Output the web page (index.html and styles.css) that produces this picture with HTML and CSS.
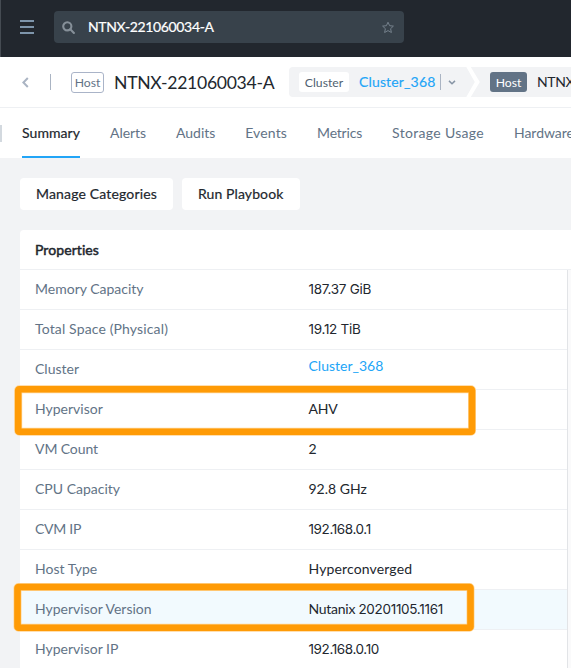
FILE: index.html
```
<!DOCTYPE html>
<html lang="en">
<head>
<meta charset="utf-8">
<title>NTNX-221060034-A</title>
<link rel="stylesheet" href="styles.css">
</head>
<body>
<div class="page">
  <header class="topbar">
    <svg class="menu" width="14" height="14" viewBox="0 0 14 14"><path d="M0 1h14M0 7h14M0 13h14"/></svg>
    <div class="search">
      <svg class="lens" width="13" height="13" viewBox="0 0 13 13"><circle cx="5.3" cy="5.3" r="4.1"/><path d="M8.3 8.3l3.6 3.6"/></svg>
      <span class="query">NTNX-221060034-A</span>
      <svg class="star" width="14" height="13" viewBox="0 0 14 13"><path d="M7 1.2l1.6 3.5 3.8.4-2.8 2.6.8 3.8L7 9.6l-3.4 1.9.8-3.8L1.6 5.1l3.8-.4z"/></svg>
    </div>
  </header>

  <div class="titlebar">
    <svg class="back" width="7" height="11" viewBox="0 0 7 11"><path d="M5.8 1L1.4 5.5 5.8 10"/></svg>
    <span class="rule"></span>
    <span class="tag outlined">Host</span>
    <h1>NTNX-221060034-A</h1>
    <nav class="crumbs">
      <span class="tag plain">Cluster</span>
      <a class="crumb-link">Cluster_368</a>
      <span class="rule crumb-rule"></span>
      <svg class="caret" width="8" height="5" viewBox="0 0 8 5"><path d="M1 .9l3 2.9 3-2.9"/></svg>
      <svg class="sep" width="14" height="30" viewBox="0 0 14 30"><path d="M.3 0h4.5l9 15-9 15H.3l8.5-15z"/></svg>
      <span class="tag filled">Host</span>
      <span class="crumb-current">NTNX-221060034-A</span>
    </nav>
  </div>

  <nav class="tabs">
    <span class="edge"></span>
    <a class="tab active">Summary</a>
    <a class="tab">Alerts</a>
    <a class="tab">Audits</a>
    <a class="tab roomy">Events</a>
    <a class="tab snug">Metrics</a>
    <a class="tab wide">Storage Usage</a>
    <a class="tab">Hardware</a>
  </nav>

  <main>
    <div class="actions">
      <button class="manage">Manage Categories</button>
      <button>Run Playbook</button>
    </div>
    <section class="card">
      <h2>Properties</h2>
      <dl>
        <div class="row"><dt>Memory Capacity</dt><dd class="num">187.37 GiB</dd></div>
        <div class="row"><dt class="w1">Total Space (Physical)</dt><dd class="num">19.12 TiB</dd></div>
        <div class="row"><dt>Cluster</dt><dd class="link">Cluster_368</dd></div>
        <div class="row"><dt>Hypervisor</dt><dd class="t3">AHV</dd></div>
        <div class="row"><dt class="t1">VM Count</dt><dd>2</dd></div>
        <div class="row"><dt>CPU Capacity</dt><dd>92.8 GHz</dd></div>
        <div class="row"><dt class="t3">CVM IP</dt><dd class="num ip">192.168.0.1</dd></div>
        <div class="row"><dt>Host Type</dt><dd class="w1">Hyperconverged</dd></div>
        <div class="row hover"><dt>Hypervisor Version</dt><dd class="t3">Nutanix <span class="num build">20201105.1161</span></dd></div>
        <div class="row"><dt>Hypervisor IP</dt><dd class="num ip">192.168.0.10</dd></div>
      </dl>
    </section>
  </main>

  <svg class="marks" width="571" height="668" viewBox="0 0 571 668">
    <g class="halo"><rect x="18.2" y="389.2" width="453.8" height="42.6" rx="1"/><rect x="17.5" y="587" width="453" height="40.8" rx="1"/></g>
    <g class="ink"><rect x="18.2" y="389.2" width="453.8" height="42.6" rx="1"/><rect x="17.5" y="587" width="453" height="40.8" rx="1"/></g>
  </svg>
</div>
</body>
</html>
```
FILE: styles.css
```
* { box-sizing: border-box; }
body { margin: 0; font: 14px/20px Lato, "Liberation Sans", sans-serif; color: #22272e; }
h1, h2, dl, dd { margin: 0; font-weight: 400; }
svg { flex: none; fill: none; }
.page { position: relative; width: 571px; height: 668px; overflow: hidden; background: #f2f3f5; }

.topbar { display: flex; align-items: center; height: 57px; padding: 0 0 3px 19px; background: #22272e; border-left: 1px solid #454b52; }
.menu { stroke: #7e95ab; stroke-width: 1.9; }
.search { display: flex; align-items: center; width: 350px; height: 32px; margin-left: 20px; padding: 0 9px 0 8px; border-radius: 4px; background: #38424b; }
.lens { stroke: #869099; stroke-width: 2.1; stroke-linecap: round; }
.query { flex: 1; margin-left: 13px; color: #fff; letter-spacing: -.36px; -webkit-text-stroke: .2px #fff; }
.star { stroke: #75818c; stroke-width: 1; stroke-linejoin: round; }

.titlebar { display: flex; align-items: center; height: 51px; padding-left: 22px; background: #fff; border-bottom: 1px solid #eef0f3; white-space: nowrap; }
.back { stroke: #aab4c3; stroke-width: 2; }
.rule { flex: none; width: 1px; height: 16px; margin-left: 21px; background: #aab4c3; }
.tag { flex: none; height: 20px; border-radius: 3px; font-size: 12.2px; line-height: 21px; text-align: center; }
.outlined { width: 33px; height: 21px; margin-left: 20px; border: 1px solid #aab4c8; color: #627386; line-height: 20px; }
h1 { flex: none; width: 175px; margin-left: 10px; padding-top: 2px; font-size: 17.6px; letter-spacing: -.3px; line-height: 24px; }
.crumbs { display: flex; flex: none; align-items: center; height: 30px; width: 400px; padding-left: 10px; border-radius: 4px; background: #f2f3f5; }
.plain { width: 50px; background: #fff; color: #505f70; }
.crumb-link { width: 81px; margin-left: 10px; color: #22a5f7; letter-spacing: .15px; -webkit-text-stroke: .15px; }
.crumb-rule { margin: 0; }
.caret { margin-left: 7px; stroke: #8795a5; stroke-width: 1.5; }
.sep { margin-left: 10px; }
.sep path { fill: #fff; }
.filled { width: 37px; margin-left: 10px; background: #627386; color: #fff; }
.crumb-current { margin-left: 10px; letter-spacing: -.36px; }

.tabs { position: relative; display: flex; gap: 30px; height: 50px; padding-left: 22px; background: #fff; }
.edge { position: absolute; left: 0; top: 17px; width: 2px; height: 17px; background: #d3d9df; }
.tab { flex: none; height: 50px; line-height: 50px; color: #627386; letter-spacing: -.05px; }
.active { color: #22272e; letter-spacing: .07px; -webkit-text-stroke: .2px; border-bottom: 2px solid #22a5f7; }
.roomy { letter-spacing: .15px; }
.snug { letter-spacing: -.2px; }
.wide { letter-spacing: .32px; }

main { padding: 20px 0 0 20px; }
.actions { display: flex; gap: 9px; }
button { width: 118px; height: 32px; padding: 0 0 0 16px; border: 0; border-radius: 4px; background: #fff; color: #22272e; font: inherit; letter-spacing: .1px; text-align: left; -webkit-text-stroke: .2px; }
.manage { width: 153px; letter-spacing: .16px; }
.card { margin-top: 20px; border-radius: 4px 0 0 0; background: #fff; }
h2 { height: 40px; padding-left: 15px; border-bottom: 1px solid #eef0f3; font-size: 14px; line-height: 40px; letter-spacing: .08px; -webkit-text-stroke: .5px; }
dl { width: 548px; border-right: 1px solid #e2e4e7; box-shadow: 3px 0 0 #fafafb; }
.row { display: grid; grid-template-columns: 273.5px 1fr; height: 40px; padding-left: 15px; border-bottom: 1px solid #eef0f3; line-height: 38px; }
dt { color: #627386; }
.hover { background: #f2fafe; }
.link { height: 32px; line-height: 32px; color: #22a5f7; }
.t1 { letter-spacing: -.1px; }
.t3 { letter-spacing: -.27px; }
.w1 { letter-spacing: .14px; }
.num { font-family: Inter, "Liberation Sans", sans-serif; font-size: 13.5px; letter-spacing: -.28px; }
.ip { letter-spacing: -.4px; }
.build { letter-spacing: -.3px; }

.marks { position: absolute; left: 0; top: 0; }
.halo { stroke: #ffd596; stroke-width: 8; }
.ink { stroke: #ff9b06; stroke-width: 6.6; stroke-linejoin: round; }
```
